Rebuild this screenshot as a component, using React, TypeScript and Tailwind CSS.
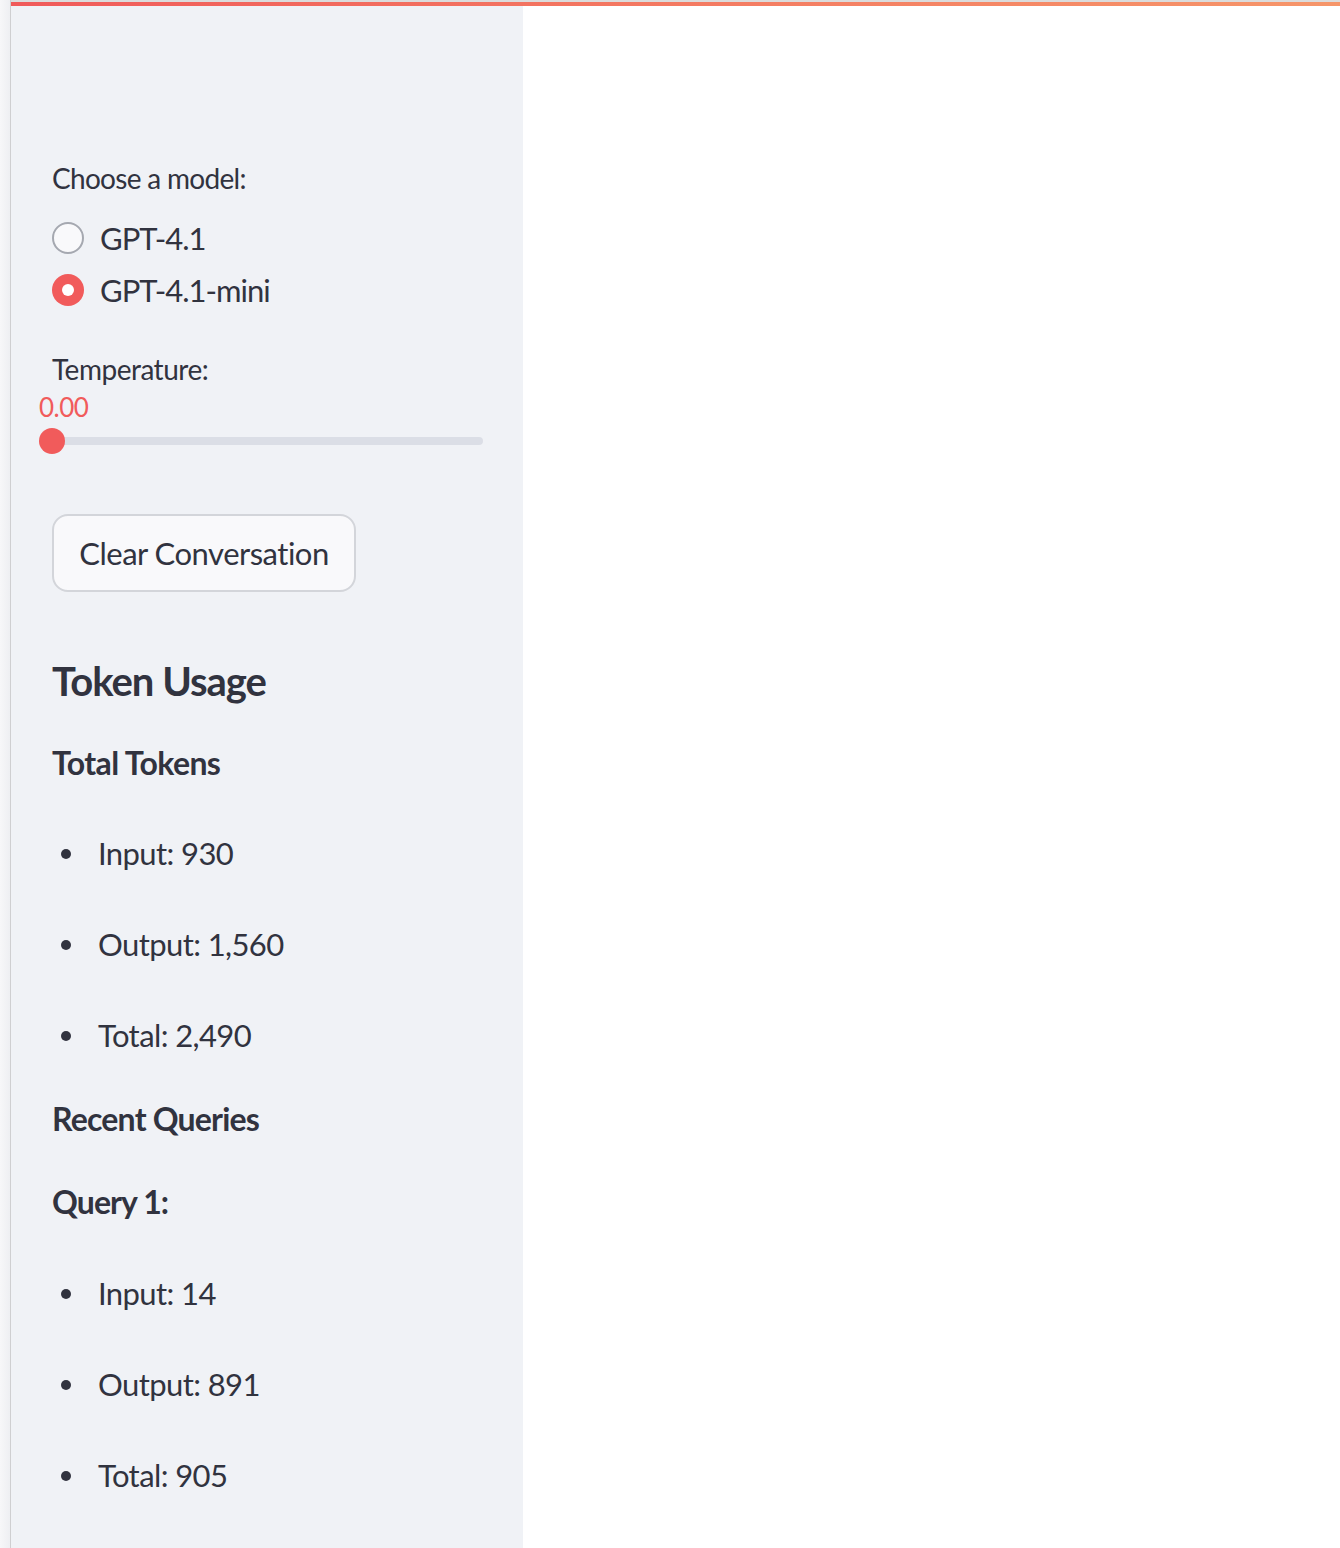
import * as React from "react";

type Item = { label: string };

function Bullet({ label }: Item) {
  return (
    <li className="flex items-center h-[91px]">
      <span className="ml-[9px] w-[10px] h-[10px] rounded-full bg-[#31333f]" />
      <span className="ml-[27px] text-[31px] tracking-[-0.6px] leading-[91px]">{label}</span>
    </li>
  );
}

export default function App() {
  const totals = ["Input: 930", "Output: 1,560", "Total: 2,490"];
  const query = ["Input: 14", "Output: 891", "Total: 905"];

  return (
    <div
      className="flex w-[1340px] h-[1548px] overflow-hidden bg-white text-[#31333f]"
      style={{ fontFamily: "Lato, 'Noto Sans', sans-serif" }}
    >
      <div className="w-[10px] h-full bg-gradient-to-r from-[#f7f7f9] to-[#eeeff2]" />
      <div className="w-[1px] h-full bg-[#cfcfd1]" />
      <div className="flex flex-col flex-1">
        <div className="h-[2px] bg-[#dcdcdc]" />
        <div className="h-[4px] bg-gradient-to-r from-[#f05a5a] to-[#f6966a]" />
        <div className="flex flex-1">
          <aside className="w-[512px] h-full bg-[#f0f2f6] pl-[41px] pr-[40px]">
            <div className="h-[152px]" />
            <div className="h-[40px] leading-[40px] text-[28px] tracking-[-0.7px]">Choose a model:</div>
            <div className="h-[14px]" />
            <div className="flex items-center h-[52px]">
              <span className="w-[32px] h-[32px] rounded-full border-2 border-[#a5a8b0] bg-[#f9f9fb]" />
              <span className="ml-[16px] text-[31px] tracking-[-1px]">GPT-4.1</span>
            </div>
            <div className="flex items-center h-[52px]">
              <span className="flex items-center justify-center w-[32px] h-[32px] rounded-full bg-[#f15b5b]">
                <span className="w-[12px] h-[12px] rounded-full bg-white" />
              </span>
              <span className="ml-[16px] text-[31px] tracking-[-1px]">GPT-4.1-mini</span>
            </div>
            <div className="h-[33px]" />
            <div className="h-[40px] leading-[40px] text-[28px] tracking-[-0.5px]">Temperature:</div>
            <div className="-ml-[13px] h-[36px] leading-[36px] text-[26px] tracking-[-0.5px] text-[#f15b5b]">0.00</div>
            <div className="-ml-[13px] relative h-[32px] flex items-center">
              <div className="w-[444px] h-[8px] rounded-full bg-[#dbdee6]" />
              <span className="absolute left-0 top-[3px] w-[26px] h-[26px] rounded-full bg-[#f15b5b]" />
            </div>
            <div className="h-[57px]" />
            <button className="h-[78px] w-[304px] rounded-[16px] border-2 border-[#d3d5da] bg-[#f9f9fb] text-[31px] tracking-[-0.5px]">
              Clear Conversation
            </button>
            <div className="h-[59px]" />
            <h3 className="h-[60px] leading-[60px] text-[40px] tracking-[-1px] font-bold">Token Usage</h3>
            <div className="h-[30px]" />
            <h4 className="h-[44px] leading-[44px] text-[32px] tracking-[-0.6px] font-bold">Total Tokens</h4>
            <div className="h-[23px]" />
            <ul>
              {totals.map((t) => (
                <Bullet key={t} label={t} />
              ))}
            </ul>
            <div className="h-[16px]" />
            <h4 className="h-[44px] leading-[44px] text-[32px] tracking-[-0.8px] font-bold">Recent Queries</h4>
            <div className="h-[39px]" />
            <h4 className="h-[44px] leading-[44px] text-[32px] tracking-[-0.9px] font-bold">Query 1:</h4>
            <div className="h-[24px]" />
            <ul>
              {query.map((t) => (
                <Bullet key={t} label={t} />
              ))}
            </ul>
          </aside>
          <main className="flex-1 bg-white" />
        </div>
      </div>
    </div>
  );
}
